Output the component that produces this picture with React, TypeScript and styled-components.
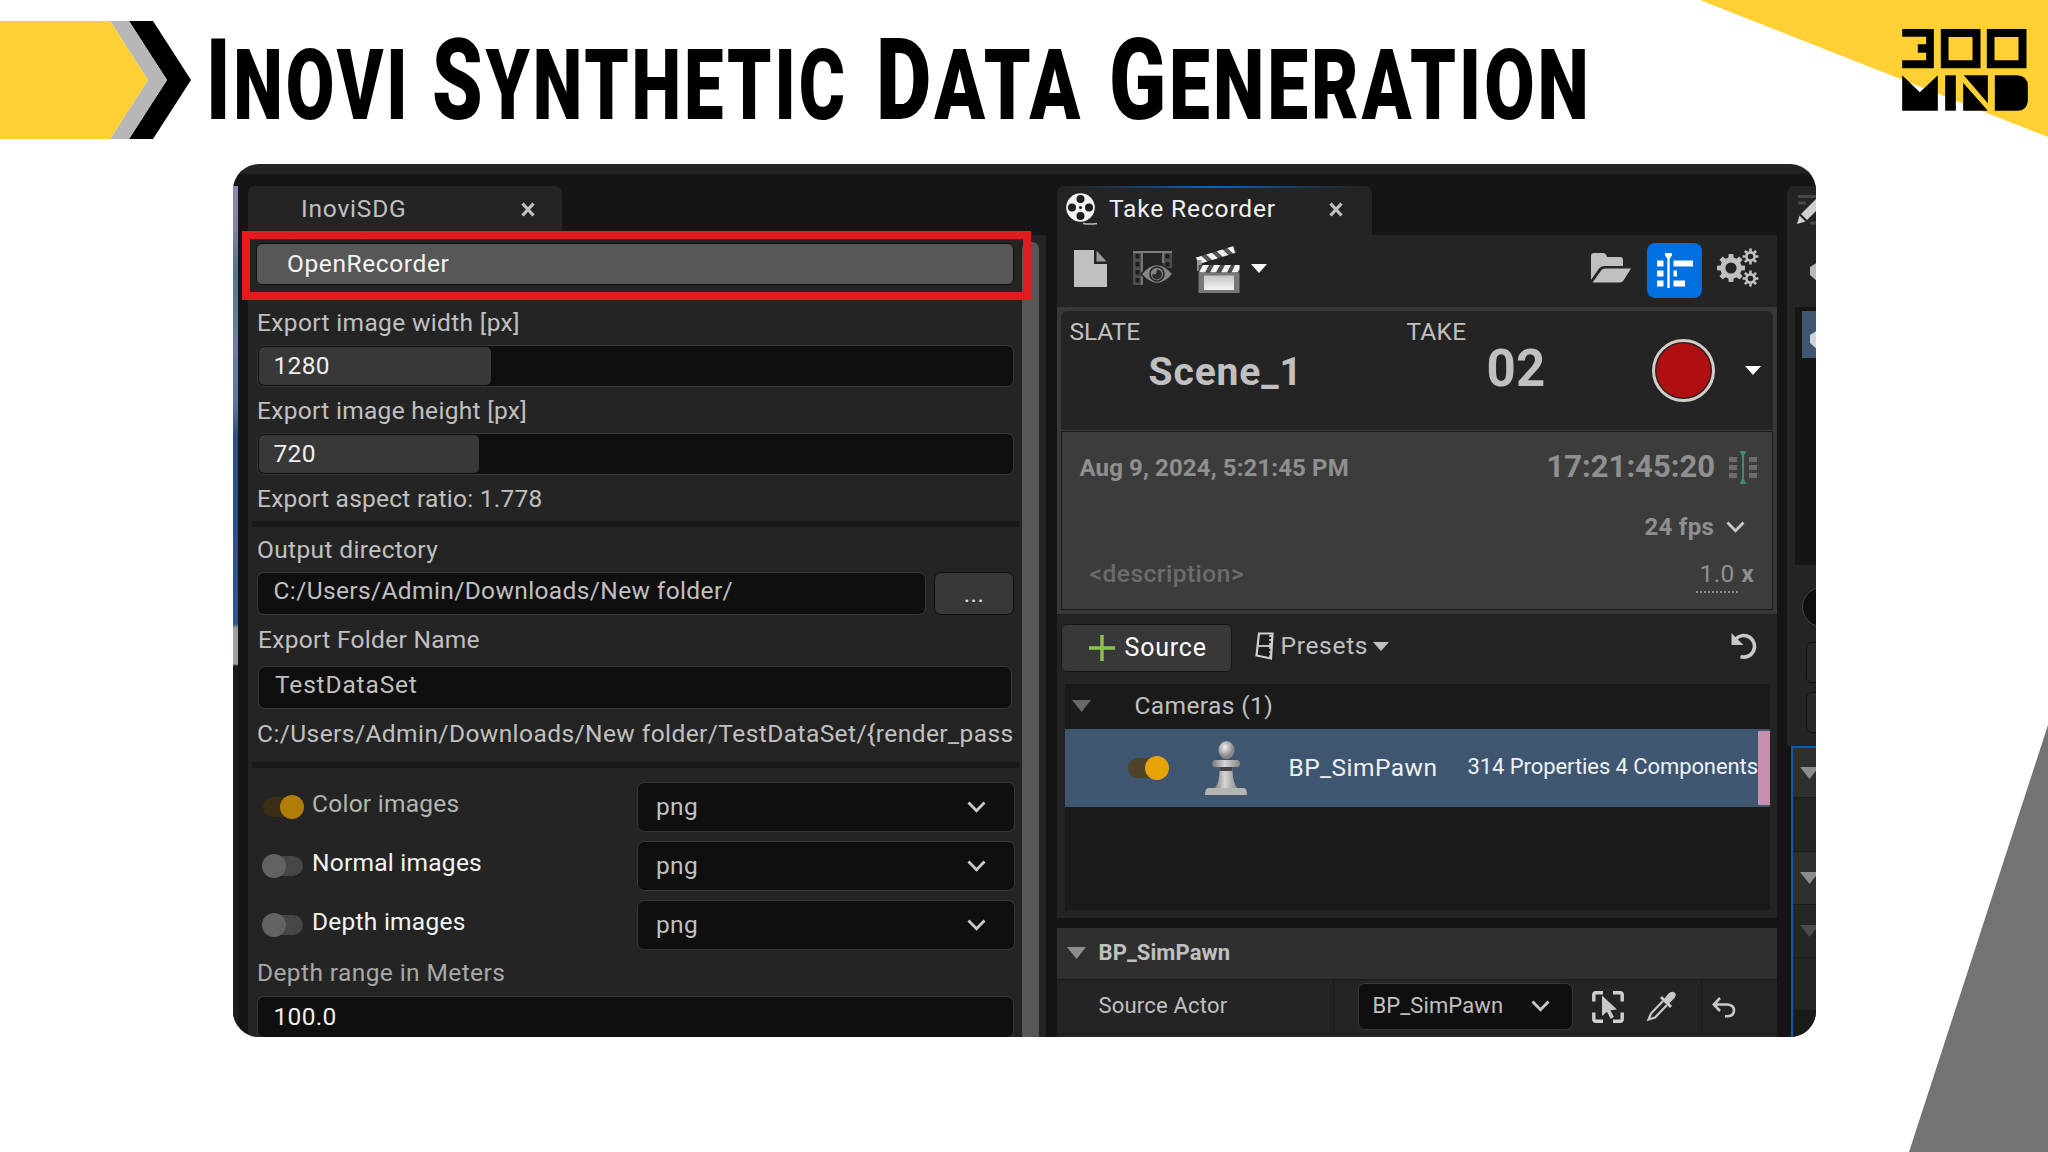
import React from "react";
import styled, { createGlobalStyle } from "styled-components";

const GlobalStyle = createGlobalStyle`
  html, body { margin: 0; padding: 0; background: #fff; }
  body { width: 2048px; height: 1152px; overflow: hidden; }
  *, *::before, *::after { box-sizing: border-box; }
`;

const c = {
  yellow: "#ffd034",
  panel: "#242424",
  gutter: "#151515",
  input: "#0f0f0f",
  line: "#383838",
  header: "#2f2f2f",
  recess: "#1a1a1a",
  text: "#c0c0c0",
  blue: "#0070e0",
  select: "#3e566f",
};

const Slide = styled.main`
  position: relative;
  width: 2048px;
  height: 1152px;
  overflow: hidden;
  background: #fff;
  font-family: Roboto, "Liberation Sans", sans-serif;
`;

const Backdrop = styled.svg`
  position: absolute;
  inset: 0;
`;

const SlideHeader = styled.header`
  position: relative;
  display: flex;
  justify-content: space-between;
  align-items: flex-start;
  height: 164px;
  padding: 0 20px 0 206px;
`;

const Title = styled.h1`
  display: flex;
  margin: 0;
  height: 160px;
  color: #000;
  font-size: 112.5px;
  font-weight: 900;
  letter-spacing: 4px;
  line-height: 160px;
`;

const Word = styled.span<{ $width: number; $gap: number; $scale: number }>`
  display: block;
  width: ${(p) => p.$width}px;
  margin-right: ${(p) => p.$gap}px;
  white-space: nowrap;
  transform: translateY(1px) scaleX(${(p) => p.$scale});
  transform-origin: 0 50%;
`;

const SmallCaps = styled.span`
  font-size: 98px;
`;

const LogoMark = styled.svg`
  display: block;
  margin-top: 29px;
`;

const Editor = styled.section`
  position: relative;
  display: flex;
  width: 1583px;
  height: 873px;
  margin-left: 233px;
  padding-top: 22px;
  overflow: hidden;
  border-radius: 26px;
  background: linear-gradient(${c.panel} 0 9px, ${c.gutter} 11px);
`;

const ViewportSliver = styled.div`
  flex: none;
  width: 5px;
  height: 852px;
  margin-right: 10px;
  background: linear-gradient(
    #8e88b2 0,
    #827fa8 45px,
    #537590 85px,
    #6e7fa3 160px,
    #5b7698 220px,
    #2d4c82 250px,
    #2d568a 438px,
    #a39d9b 442px 478px,
    #1c1c1c 480px
  );
`;

const Column = styled.div<{ $width: number; $gap?: number }>`
  display: flex;
  flex: none;
  flex-direction: column;
  width: ${(p) => p.$width}px;
  margin-right: ${(p) => p.$gap ?? 0}px;
`;

const Tab = styled.div<{ $width: number; $active?: boolean; $pad: string }>`
  position: relative;
  display: flex;
  flex: none;
  align-items: center;
  width: ${(p) => p.$width}px;
  height: 49px;
  padding: ${(p) => p.$pad};
  border-radius: 7px 7px 0 0;
  background: ${(p) =>
    p.$active
      ? `linear-gradient(90deg, transparent 5%, #0a64c0 50%, transparent 95%) top / 100% 2px no-repeat, ${c.panel}`
      : c.panel};
`;

const Text = styled.span<{
  $size?: number;
  $weight?: number;
  $color?: string;
  $track?: number;
  $ml?: number;
}>`
  flex: none;
  margin-left: ${(p) => p.$ml ?? 0}px;
  color: ${(p) => p.$color ?? c.text};
  font-size: ${(p) => p.$size ?? 24.5}px;
  font-weight: ${(p) => p.$weight ?? 400};
  letter-spacing: ${(p) => p.$track ?? 0.3}px;
  line-height: 30px;
  white-space: pre;
`;

const Icon = styled.svg<{ $ml?: number; $mt?: number }>`
  display: block;
  flex: none;
  margin-left: ${(p) => p.$ml ?? 0}px;
  margin-top: ${(p) => p.$mt ?? 0}px;
  overflow: visible;
`;

const SettingsBody = styled.div`
  display: flex;
  flex: 1;
  background: ${c.panel};
`;

const Form = styled.div`
  display: flex;
  flex-direction: column;
  width: 771px;
  padding: 8px 5px 0 4px;
`;

const Scrollbar = styled.div`
  width: 17px;
  margin: 7px 0 0 3px;
  border-radius: 7px 7px 0 0;
  background: #575757;
`;

const OpenButton = styled.button`
  flex: none;
  width: 758px;
  height: 42px;
  margin-left: 4px;
  padding: 0 0 0 30px;
  border: 1.5px solid ${c.input};
  border-radius: 6px;
  background: #575757;
  text-align: left;
  font-family: inherit;
`;

const Highlight = styled.div`
  position: absolute;
  left: 9px;
  top: 67px;
  width: 789px;
  height: 69px;
  border: 8px solid #e51a1c;
`;

const FieldLabel = styled.label<{ $top: number; $bottom: number; $indent?: number }>`
  display: flex;
  flex: none;
  width: 757px;
  overflow: hidden;
  margin: ${(p) => p.$top}px 0 ${(p) => p.$bottom}px ${(p) => 5 + (p.$indent ?? 0)}px;
`;

const FieldRow = styled.div`
  display: flex;
  flex: none;
  gap: 8px;
`;

const Field = styled.div<{ $width?: number; $height?: number; $indent?: number; $lift?: number }>`
  position: relative;
  display: flex;
  flex: none;
  align-items: center;
  width: ${(p) => p.$width ?? 757}px;
  height: ${(p) => p.$height ?? 42}px;
  margin-left: ${(p) => 4.5 + (p.$indent ?? 0)}px;
  padding: 0 0 ${(p) => p.$lift ?? 0}px 16px;
  border: 1.5px solid ${c.line};
  border-radius: 7px;
  background: ${c.input};
`;

const SliderFill = styled.div<{ $width: number }>`
  position: absolute;
  left: 1px;
  top: 1px;
  bottom: 1px;
  width: ${(p) => p.$width}px;
  border-radius: 5px;
  background: ${c.line};
`;

const OnTop = styled.span`
  position: relative;
  display: flex;
`;

const BrowseButton = styled.button`
  width: 80px;
  height: 43px;
  padding: 0 0 0 1px;
  border: 1.5px solid ${c.input};
  border-radius: 7px;
  background: ${c.line};
  font-family: inherit;
`;

const Divider = styled.hr`
  flex: none;
  width: 767px;
  height: 6px;
  margin: 0;
  border: 0;
  background: ${c.recess};
`;

const FormatList = styled.div`
  display: flex;
  flex: none;
  flex-direction: column;
  gap: 9px;
  padding: 14px 0 0 10px;
`;

const FormatRow = styled.div`
  display: flex;
  align-items: center;
  height: 50px;
`;

const FormatName = styled.div`
  flex: none;
  width: 333px;
  padding: 0 0 6px 8px;
`;

const Switch = styled.div<{ $on?: boolean }>`
  position: relative;
  display: flex;
  flex: none;
  align-items: center;
  justify-content: ${(p) => (p.$on ? "flex-end" : "flex-start")};
  width: 42px;
  height: 24px;
  &::before {
    content: "";
    position: absolute;
    inset: 2px 1px;
    border-radius: 10px;
    background: ${(p) => (p.$on ? "#3a2e17" : "#464646")};
  }
  &::after {
    content: "";
    position: relative;
    width: 24px;
    height: 24px;
    border-radius: 50%;
    background: ${(p) => (p.$on ? "#b07d08" : "#626262")};
  }
`;

const RowSwitch = styled.div`
  position: relative;
  flex: none;
  width: 41px;
  height: 24px;
  margin-left: 63px;
  &::before {
    content: "";
    position: absolute;
    inset: 2px 4px 2px 0;
    border-radius: 10px;
    background: #4f4526;
  }
  &::after {
    content: "";
    position: absolute;
    right: 0;
    width: 24px;
    height: 24px;
    border-radius: 50%;
    background: #e5a305;
  }
`;

const Select = styled.div<{ $width: number; $height: number; $pad: string }>`
  display: flex;
  flex: none;
  align-items: center;
  justify-content: space-between;
  width: ${(p) => p.$width}px;
  height: ${(p) => p.$height}px;
  padding: ${(p) => p.$pad};
  border: 1.5px solid ${c.line};
  border-radius: 7px;
  background: ${c.input};
`;

const Toolbar = styled.div`
  display: flex;
  flex: none;
  align-items: center;
  height: 72px;
  padding: 0 18px 6px 0;
  background: ${c.panel};
`;

const Spacer = styled.div`
  flex: 1;
`;

const BlueButton = styled.button`
  display: grid;
  place-items: center;
  width: 55px;
  height: 55px;
  margin: 5px 15px 0 16px;
  padding: 0;
  border: 0;
  border-radius: 8px;
  background: ${c.blue};
`;

const SlateFrame = styled.div`
  flex: none;
  height: 307px;
  padding: 4px;
  background: ${c.line};
`;

const SlateTop = styled.div`
  display: flex;
  height: 119px;
  padding-top: 6px;
  border-radius: 6px 6px 2px 2px;
  background: ${c.panel};
`;

const SlateCell = styled.div<{ $width: number }>`
  display: flex;
  flex-direction: column;
  width: ${(p) => p.$width}px;
  padding-left: 9px;
`;

const BigValue = styled.strong<{ $size: number; $indent: number; $top: number; $track: number }>`
  margin: ${(p) => p.$top}px 0 0 ${(p) => p.$indent}px;
  color: ${c.text};
  font-size: ${(p) => p.$size}px;
  font-weight: 700;
  letter-spacing: ${(p) => p.$track}px;
  line-height: 50px;
`;

const RecordCell = styled.div`
  display: flex;
  align-items: center;
  height: 106px;
`;

const RecordButton = styled.button`
  width: 63px;
  height: 63px;
  padding: 0;
  border: 3px solid #d4cdc6;
  border-radius: 50%;
  background: radial-gradient(#b00f12 0 26.5px, #2a2020 27.5px);
`;

const SlateMeta = styled.div`
  display: flex;
  justify-content: space-between;
  height: 179px;
  margin-top: 1px;
  padding: 20px 15px 0 18px;
  border: 1.5px solid #1c1c1c;
  background: #3c3c3c;
`;

const MetaSide = styled.div<{ $end?: boolean }>`
  display: flex;
  flex-direction: column;
  align-items: ${(p) => (p.$end ? "flex-end" : "flex-start")};
`;

const MetaLine = styled.div<{ $top?: number; $right?: number; $left?: number }>`
  display: flex;
  align-items: center;
  height: 30px;
  margin: ${(p) => p.$top ?? 0}px ${(p) => p.$right ?? 0}px 0 ${(p) => p.$left ?? 0}px;
`;

const Dotted = styled.span`
  display: flex;
  justify-content: flex-end;
  width: 42px;
  height: 34px;
  margin-top: 4px;
  padding-right: 4px;
  border-bottom: 2px dotted #8f8f8f;
`;

const SourceBar = styled.div`
  display: flex;
  flex: none;
  align-items: center;
  height: 70px;
  padding: 0 19px 6px 4px;
  background: ${c.panel};
`;

const SourceButton = styled.button`
  display: flex;
  align-items: center;
  width: 171px;
  height: 48px;
  margin-top: 3px;
  padding: 0 0 0 27px;
  border: 1.5px solid ${c.gutter};
  border-radius: 6px;
  background: ${c.line};
  font-family: inherit;
`;

const SourceList = styled.div`
  flex: none;
  height: 234px;
  padding: 0 7px 8px 8px;
  background: ${c.panel};
`;

const SourceRows = styled.div`
  height: 226px;
  background: ${c.recess};
`;

const GroupRow = styled.div`
  display: flex;
  align-items: center;
  height: 45px;
  padding: 0 0 1px 7px;
`;

const ActorRow = styled.div`
  display: flex;
  align-items: center;
  height: 78px;
  background: ${c.select};
`;

const ActorStats = styled.div`
  display: flex;
  padding-bottom: 2px;
`;

const PinkTag = styled.div`
  width: 12px;
  height: 74px;
  background: #c98fae;
`;

const DetailsHeader = styled.div`
  display: flex;
  flex: none;
  align-items: center;
  height: 51px;
  margin-top: 10px;
  padding: 0 0 2px 10px;
  background: ${c.header};
`;

const PropertyRow = styled.div`
  display: flex;
  flex: none;
  height: 55px;
  border: solid ${c.recess};
  border-width: 1.5px 0;
  background: ${c.panel};
`;

const PropertyCell = styled.div<{ $width?: number; $pad: string }>`
  display: flex;
  align-items: center;
  width: ${(p) => (p.$width ? `${p.$width}px` : "auto")};
  padding: ${(p) => p.$pad};
  border-right: 1.5px solid ${c.recess};
  &:last-child { border-right: 0; }
`;

const PanelEnd = styled.div`
  flex: 1;
  background: ${c.panel};
`;

const OutlinerTop = styled.div`
  height: 72px;
  padding: 26px 0 0 23px;
  background: ${c.panel};
`;

const OutlinerList = styled.div`
  height: 258px;
  padding-top: 4px;
  border-left: 8px solid ${c.panel};
  background: ${c.gutter};
`;

const OutlinerSelected = styled.div`
  height: 47px;
  margin-left: 7px;
  padding: 18px 0 0 8px;
  background: ${c.select};
`;

const OutlinerFields = styled.div`
  height: 181px;
  padding: 22px 0 0 15px;
  background: ${c.panel};
`;

const SearchPill = styled.div`
  width: 40px;
  height: 40px;
  border: 1.5px solid #454545;
  border-radius: 50%;
  background: ${c.input};
`;

const SmallField = styled.div<{ $top: number }>`
  width: 40px;
  height: 41px;
  margin: ${(p) => p.$top}px 0 0 4px;
  border: 1.5px solid #111;
  border-radius: 6px;
  background: #292929;
`;

const DetailsSliver = styled.div`
  flex: 1;
  margin-left: 4px;
  border: solid #0a5db5;
  border-width: 2px 0 0 2px;
  background: ${c.recess};
`;

const SliverRow = styled.div<{ $height: number; $fill: string }>`
  display: flex;
  align-items: center;
  height: ${(p) => p.$height}px;
  padding-left: 7px;
  border-bottom: 1.5px solid ${c.recess};
  background: ${(p) => p.$fill};
`;

const Close = ({ ml }: { ml: number }) => (
  <Icon $ml={ml} width="14" height="15" viewBox="0 0 14 15">
    <path d="M1.5 1.5 12.5 13.5M12.5 1.5 1.5 13.5" stroke="#c0c0c0" strokeWidth="3.2" />
  </Icon>
);

const Chevron = ({ ml, color = "#c8c8c8" }: { ml?: number; color?: string }) => (
  <Icon $ml={ml} width="19" height="12" viewBox="0 0 19 12">
    <path d="M1.5 1.5 9.5 9.7 17.5 1.5" fill="none" stroke={color} strokeWidth="2.8" />
  </Icon>
);

const Caret = ({ ml, w, h, color }: { ml?: number; w: number; h: number; color: string }) => (
  <Icon $ml={ml} width={w} height={h} viewBox="0 0 10 10" preserveAspectRatio="none">
    <path d="M0 0H10L5 10Z" fill={color} />
  </Icon>
);

const gearPath = (cx: number, cy: number, r: number, tooth: number, n: number) => {
  const pts: string[] = [];
  for (let i = 0; i < n; i++) {
    const a = (i / n) * Math.PI * 2 - Math.PI / 2;
    const w = Math.PI / n;
    [
      [-0.62, r],
      [-0.42, r + tooth],
      [0.42, r + tooth],
      [0.62, r],
    ].forEach(([k, rad]) => {
      pts.push(`${(cx + Math.cos(a + k * w) * rad).toFixed(2)} ${(cy + Math.sin(a + k * w) * rad).toFixed(2)}`);
    });
  }
  return `M${pts.join("L")}Z`;
};

const ring = (cx: number, cy: number, r: number) =>
  `M${cx - r} ${cy}a${r} ${r} 0 1 0 ${2 * r} 0a${r} ${r} 0 1 0 ${-2 * r} 0Z`;

const Gears = () => (
  <Icon width="42" height="38" viewBox="0 0 42 38" fill="#c0c0c0" fillRule="evenodd">
    <path d={gearPath(14, 19, 10.8, 3.4, 8) + ring(14, 19, 5.6)} />
    <path d={gearPath(33.5, 7.5, 5.4, 2.6, 8) + ring(33.5, 7.5, 2.8)} />
    <path d={gearPath(33.5, 29.5, 5.4, 2.6, 8) + ring(33.5, 29.5, 2.8)} />
  </Icon>
);

const FilmReel = () => (
  <Icon width="31" height="32" viewBox="0 0 31 32">
    <circle cx="14.5" cy="14.5" r="14.3" fill="#f2f2f2" />
    <g fill="#1d1d1d">
      <circle cx="14.5" cy="6" r="4" />
      <circle cx="14.5" cy="23" r="4" />
      <circle cx="6" cy="14.5" r="4" />
      <circle cx="23" cy="14.5" r="4" />
      <circle cx="14.5" cy="14.5" r="1.5" />
    </g>
    <path d="M17 30.5q7 1.2 14 0" stroke="#bbb" strokeWidth="1.5" fill="none" />
  </Icon>
);

const NewDocument = () => (
  <Icon $ml={17} width="33" height="37" viewBox="0 0 33 37">
    <path d="M0 0H20V14H33V37H0Z" fill="#c0c0c0" />
    <path d="M22.5 .5 32.5 11.5H22.5Z" fill="#9a9a9a" />
  </Icon>
);

const FilmEye = () => (
  <Icon $ml={26} width="40" height="34" viewBox="0 0 40 34">
    <path d="M0 0H9V34H0ZM30 0H39V17H30Z" fill="#4e4e4e" />
    <path
      d="M2.500 3h4v4.500h-4ZM2.500 11h4v4.500h-4ZM2.500 19h4v4.500h-4ZM2.500 27h4v4.500h-4ZM32.500 3h4v4.500h-4ZM32.500 11h4v4.500h-4Z"
      fill="#1c1c1c"
    />
    <path d="M0 1H39M9 0V34M30 0V12" stroke="#7c7c7c" strokeWidth="1.8" />
    <path d="M8 23Q24 4 40 23 24 42 8 23Z" fill="#858585" stroke={c.panel} strokeWidth="1.5" />
    <circle cx="24" cy="23" r="7" fill="#858585" stroke="#242424" strokeWidth="1.6" />
    <path d="M24 18.500a5 5 0 1 1-5 5l4-.5Z" fill="#2c2c2c" />
  </Icon>
);

const Clapper = () => (
  <Icon $ml={24} $mt={4} width="43" height="45" viewBox="0 0 43 45">
    <defs>
      <linearGradient id="board" x1="0" y1="0" x2="0" y2="1">
        <stop offset="0" stopColor="#c4c4c4" />
        <stop offset="1" stopColor="#f4f4f4" />
      </linearGradient>
    </defs>
    <g transform="rotate(-17 2 17)">
      <rect x="1" y="9" width="40" height="7" fill="#555" />
      <path d="M1 9h6l4 7H4ZM12 9h6l4 7h-6ZM23 9h6l4 7h-6ZM34 9h6v7h-2Z" fill="#f3f3f3" />
    </g>
    <path d="M0 12h4.500v11H0Z" fill="#9a9a9a" />
    <rect x="1.500" y="17" width="41" height="7.500" fill="#4c4c4c" />
    <path d="M6 17h6l-4 7.500H2ZM17 17h6l-4 7.500h-6ZM28 17h6l-4 7.500h-6ZM38 17h4.500v4l-2 3.500h-6Z" fill="#f5f5f5" />
    <rect x="1.500" y="24.500" width="41" height="20.500" fill="#777" />
    <rect x="7" y="27.500" width="30" height="14.500" fill="url(#board)" />
  </Icon>
);

const Folder = () => (
  <Icon width="40" height="30" viewBox="0 0 40 30" fill="#c0c0c0">
    <path d="M0 27V3Q0 0 3 0H12Q15 0 16 4H29Q32 4 32 7V13H13Q10 13 8 15.500Z" />
    <path d="M1.500 29.500 10.500 17Q11.500 15.500 13.500 15.500H40L32.500 27.500Q31 29.500 29 29.500Z" />
  </Icon>
);

const SequencerIcon = () => (
  <Icon width="36" height="35" viewBox="0 0 36 35" fill="#fff">
    <path d="M0 7.500h6.500v6H0ZM0 17.500h6.500v6H0ZM0 27.500h6.500v6H0ZM16.500 7.500H36v6H16.500ZM16.500 17.500H20v6h-3.500ZM16.500 27.500H28v6H16.500Z" />
    <path d="M8 0h7v2.500l-2.300 3V35h-2.400V5.500L8 2.500Z" />
  </Icon>
);

const TimecodeIcon = () => (
  <Icon $ml={14} width="28" height="33" viewBox="0 0 28 33">
    <path d="M0 6h8v5H0ZM0 14h8v5H0ZM0 22h8v5H0ZM20 6h8v5H20ZM20 14h8v5H20ZM20 22h8v5H20Z" fill="#6c6c6c" />
    <path d="M10.500 0h7L15 4.500V28l2.500 5h-7L13 28V4.500Z" fill="#3b8a72" />
  </Icon>
);

const PresetIcon = () => (
  <Icon $ml={23} width="19" height="28" viewBox="0 0 19 28">
    <path d="M4 1.500H17.500L16 26.500 1.500 23.500Z" fill="#1d1d1d" stroke="#d0d0d0" strokeWidth="2.2" />
    <path d="M2.500 14H16.500" stroke="#d0d0d0" strokeWidth="1.8" />
    <path d="M15.500 3v22" stroke="#d0d0d0" strokeWidth="2.5" strokeDasharray="2 2" />
  </Icon>
);

const ResetIcon = () => (
  <Icon width="27" height="28" viewBox="0 0 27 28">
    <path d="M5 6.800A10.800 10.800 0 1 1 9.500 24.600" fill="none" stroke="#c8c8c8" strokeWidth="3.6" />
    <path d="M.5 1V13H12.500L8.700 9.200 4.200 4.700Z" fill="#c8c8c8" />
  </Icon>
);

const Pawn = () => (
  <Icon $ml={36} width="42" height="54" viewBox="0 0 42 54">
    <defs>
      <linearGradient id="pawn" x1="0" x2="1">
        <stop offset="0" stopColor="#777" />
        <stop offset=".45" stopColor="#d6d6d6" />
        <stop offset="1" stopColor="#858585" />
      </linearGradient>
      <radialGradient id="head" cx=".4" cy=".35">
        <stop offset="0" stopColor="#f2f2f2" />
        <stop offset="1" stopColor="#8a8a8a" />
      </radialGradient>
    </defs>
    <path d="M14.500 25H27.500V31Q28 42 33 48H9Q14.500 42 14.500 31Z" fill="url(#pawn)" />
    <path d="M14.500 25.500H27.500V30H14.500Z" fill="#444" />
    <rect x="7" y="19" width="28" height="7" rx="3.500" fill="url(#pawn)" />
    <ellipse cx="21.500" cy="9" rx="8" ry="9" fill="url(#head)" />
    <path d="M3 47H39Q42 47.500 42 54H0Q0 47.500 3 47Z" fill="#b4b4b4" />
  </Icon>
);

const PickActor = () => (
  <Icon $ml={19} width="32" height="32" viewBox="0 0 32 32">
    <path
      d="M1.800 10.500V4Q1.800 1.800 4 1.800H11M21 1.800H28Q30.200 1.800 30.200 4V10.500M30.200 21.500V28Q30.200 30.200 28 30.200H21M11 30.200H4Q1.800 30.200 1.800 28V21.500"
      fill="none"
      stroke="#d0d0d0"
      strokeWidth="3.4"
    />
    <path d="M10 4.500 25 18.500 18.300 19.200 22 26 18.600 27.800 15 20.800 10 25Z" fill="#c8c8c8" />
  </Icon>
);

const Eyedropper = () => (
  <Icon $ml={22} width="30" height="31" viewBox="0 0 30 31">
    <path d="M17 10 5 22.500 2.500 28.500 9 26.500 21 14" fill="none" stroke="#c8c8c8" strokeWidth="2.2" />
    <path d="M14 7 24 17 26 15 23.500 12 28.500 7Q31 3.500 28.500 1.500 26 -.5 22.500 2.500L18.500 7.500 16 5Z" fill="#c8c8c8" />
  </Icon>
);

const Revert = () => (
  <Icon width="24" height="21" viewBox="0 0 24 21">
    <path d="M8 1 1.800 7.500 8 14M2 7.500H15.500Q22 8 22 13.500T15.500 19.200H13" fill="none" stroke="#c8c8c8" strokeWidth="2.6" />
  </Icon>
);

const Logo = () => (
  <LogoMark width="126" height="82" viewBox="757 87 377 246" fillRule="evenodd">
    <path d="M757 87H852V205H757V181H829V158H804V133H829V110H757Z" />
    <path d="M873 87H992V205H873ZM896 111V181H968V111Z" />
    <path d="M1011 87H1130V205H1011ZM1034 111V181H1106V111Z" />
    <path d="M757 226 810 277 864 226V332H757Z" />
    <path d="M886 226H918V332H886Z" />
    <path d="M940 248 1014 332H940ZM942 226H1014V310Z" />
    <path d="M1035 226H1102Q1134 228 1134 258V302Q1132 332 1102 332H1035Z" />
  </LogoMark>
);

const formats = [
  { name: "Color images", on: true },
  { name: "Normal images", on: false },
  { name: "Depth images", on: false },
];

const SettingsPanel = () => (
  <Column $width={798} $gap={10.5}>
    <Tab $width={314} $pad="0 0 3px 53px">
      <Text $track={0.8}>InoviSDG</Text>
      <Close ml={114} />
    </Tab>
    <SettingsBody>
      <Form>
        <OpenButton>
          <Text $color="#f4f4f4" $track={0.6}>OpenRecorder</Text>
        </OpenButton>
        <FieldLabel $top={23} $bottom={7}>
          <Text $track={0.35}>Export image width [px]</Text>
        </FieldLabel>
        <Field>
          <SliderFill $width={232} />
          <OnTop><Text $color="#eee">1280</Text></OnTop>
        </Field>
        <FieldLabel $top={9} $bottom={7}>
          <Text>Export image height [px]</Text>
        </FieldLabel>
        <Field>
          <SliderFill $width={220} />
          <OnTop><Text $color="#eee">720</Text></OnTop>
        </Field>
        <FieldLabel $top={9} $bottom={7}>
          <Text $track={0.25}>Export aspect ratio: 1.778</Text>
        </FieldLabel>
        <Divider />
        <FieldLabel $top={8} $bottom={7}>
          <Text $track={0.37}>Output directory</Text>
        </FieldLabel>
        <FieldRow>
          <Field $width={669} $height={43} $lift={5}>
            <Text $track={0.38}>C:/Users/Admin/Downloads/New folder/</Text>
          </Field>
          <BrowseButton>
            <Text $color="#ddd">...</Text>
          </BrowseButton>
        </FieldRow>
        <FieldLabel $top={10} $bottom={11} $indent={1}>
          <Text>Export Folder Name</Text>
        </FieldLabel>
        <Field $width={754} $height={43} $indent={1.5} $lift={5}>
          <Text $track={0.85}>TestDataSet</Text>
        </Field>
        <FieldLabel $top={10} $bottom={13}>
          <Text $track={0.43}>{"C:/Users/Admin/Downloads/New folder/TestDataSet/{render_pass"}</Text>
        </FieldLabel>
        <Divider />
        <FormatList>
          {formats.map((f) => (
            <FormatRow key={f.name}>
              <Switch $on={f.on} />
              <FormatName>
                <Text $color={f.on ? "#b4b4b4" : "#f4f4f4"} $track={0.25}>{f.name}</Text>
              </FormatName>
              <Select $width={378} $height={50} $pad="0 28px 0 18px">
                <Text>png</Text>
                <Chevron />
              </Select>
            </FormatRow>
          ))}
        </FormatList>
        <FieldLabel $top={8} $bottom={8}>
          <Text $color="#a8a8a8" $track={0.4}>Depth range in Meters</Text>
        </FieldLabel>
        <Field $lift={1}>
          <Text $color="#eee">100.0</Text>
        </Field>
      </Form>
      <Scrollbar />
    </SettingsBody>
  </Column>
);

const RecorderPanel = () => (
  <Column $width={720.5} $gap={10}>
    <Tab $width={315} $active $pad="0 0 3px 9.5px">
      <FilmReel />
      <Text $ml={12} $color="#f2f2f2" $track={0.85}>Take Recorder</Text>
      <Close ml={53} />
    </Tab>
    <Toolbar>
      <NewDocument />
      <FilmEye />
      <Clapper />
      <Caret ml={11} w={16} h={9} color="#fff" />
      <Spacer />
      <Folder />
      <BlueButton><SequencerIcon /></BlueButton>
      <Gears />
    </Toolbar>
    <SlateFrame>
      <SlateTop>
        <SlateCell $width={337}>
          <Text $track={-0.1}>SLATE</Text>
          <BigValue $size={39} $indent={79} $top={0} $track={0.9}>Scene_1</BigValue>
        </SlateCell>
        <SlateCell $width={254}>
          <Text $track={0.2}>TAKE</Text>
          <BigValue $size={51} $indent={80} $top={-3} $track={0.3}>02</BigValue>
        </SlateCell>
        <RecordCell>
          <RecordButton aria-label="Record" />
          <Caret ml={30} w={16} h={9} color="#fff" />
        </RecordCell>
      </SlateTop>
      <SlateMeta>
        <MetaSide>
          <MetaLine $top={1}>
            <Text $weight={700} $size={24} $color="#8f8f8f" $track={0.12}>Aug 9, 2024, 5:21:45 PM</Text>
          </MetaLine>
          <MetaLine $top={76} $left={10}>
            <Text $weight={500} $color="#6c6c6c" $track={0.5}>{"<description>"}</Text>
          </MetaLine>
        </MetaSide>
        <MetaSide $end>
          <MetaLine>
            <Text $weight={700} $size={31} $color="#8f8f8f" $track={0}>17:21:45:20</Text>
            <TimecodeIcon />
          </MetaLine>
          <MetaLine $top={30} $right={12}>
            <Text $weight={700} $size={24} $color="#8f8f8f" $track={0.25}>24 fps</Text>
            <Chevron ml={12} />
          </MetaLine>
          <MetaLine $top={17} $right={3}>
            <Dotted><Text $color="#8f8f8f">1.0</Text></Dotted>
            <Text $ml={3} $weight={700} $size={24} $color="#8f8f8f">x</Text>
          </MetaLine>
        </MetaSide>
      </SlateMeta>
    </SlateFrame>
    <SourceBar>
      <SourceButton>
        <Icon width="26" height="26" viewBox="0 0 26 26">
          <path d="M13 0V26M0 13H26" stroke="#8bc24a" strokeWidth="3.4" />
        </Icon>
        <Text $ml={10} $color="#fff" $size={25} $track={0.8}>Source</Text>
      </SourceButton>
      <PresetIcon />
      <Text $ml={7} $track={0.7}>Presets</Text>
      <Caret ml={5} w={16} h={9} color="#c0c0c0" />
      <Spacer />
      <ResetIcon />
    </SourceBar>
    <SourceList>
      <SourceRows>
        <GroupRow>
          <Caret w={19} h={12} color="#686868" />
          <Text $ml={44} $track={0.4}>Cameras (1)</Text>
        </GroupRow>
        <ActorRow>
          <RowSwitch />
          <Pawn />
          <Text $ml={42} $color="#eef1f5" $track={0.45}>BP_SimPawn</Text>
          <Spacer />
          <ActorStats>
            <Text $size={22} $color="#eef1f5" $track={-0.08}>314 Properties 4 Components</Text>
          </ActorStats>
          <PinkTag />
        </ActorRow>
      </SourceRows>
    </SourceList>
    <DetailsHeader>
      <Caret w={19} h={12} color="#8c8c8c" />
      <Text $ml={13} $size={22} $weight={700} $track={0.1}>BP_SimPawn</Text>
    </DetailsHeader>
    <PropertyRow>
      <PropertyCell $width={277} $pad="0 0 1px 42px">
        <Text $size={22} $track={0.2}>Source Actor</Text>
      </PropertyCell>
      <PropertyCell $width={368} $pad="0 0 0 24px">
        <Select $width={215} $height={47} $pad="0 22px 1px 14px">
          <Text $size={22} $track={0.1}>BP_SimPawn</Text>
          <Chevron />
        </Select>
        <PickActor />
        <Eyedropper />
      </PropertyCell>
      <PropertyCell $pad="2px 0 0 10px">
        <Revert />
      </PropertyCell>
    </PropertyRow>
    <PanelEnd />
  </Column>
);

const OutlinerSliver = () => (
  <Column $width={31}>
    <Tab $width={60} $pad="0 0 3px 9px">
      <Icon width="26" height="30" viewBox="0 0 26 30">
        <path d="M2 2.500H26M2 9H10M14 29H26" stroke="#484848" strokeWidth="3" />
        <path d="M5 20 20 5 26 11 11 26ZM3.500 21.500 9.500 27.500 1 30Z" fill="#d0d0d0" />
      </Icon>
    </Tab>
    <OutlinerTop>
      <Icon width="16" height="22" viewBox="0 0 16 22">
        <path d="M0 6 8 1V21L0 14Z" fill="#b8b8b8" />
      </Icon>
    </OutlinerTop>
    <OutlinerList>
      <OutlinerSelected>
        <Icon width="16" height="22" viewBox="0 0 16 22">
          <path d="M0 6 8 1V21L0 14Z" fill="#d0d5da" />
        </Icon>
      </OutlinerSelected>
    </OutlinerList>
    <OutlinerFields>
      <SearchPill />
      <SmallField $top={15} />
      <SmallField $top={9} />
    </OutlinerFields>
    <DetailsSliver>
      <SliverRow $height={50} $fill={c.header}><Caret w={19} h={12} color="#8c8c8c" /></SliverRow>
      <SliverRow $height={54} $fill={c.panel} />
      <SliverRow $height={53} $fill={c.header}><Caret w={19} h={12} color="#8c8c8c" /></SliverRow>
      <SliverRow $height={53} $fill="#262626"><Caret w={19} h={12} color="#4a4a4a" /></SliverRow>
      <SliverRow $height={53} $fill={c.panel} />
    </DetailsSliver>
  </Column>
);

const titleWords = [
  { text: "Inovi", width: 192, gap: 34, scale: 0.72 },
  { text: "Synthetic", width: 410, gap: 34, scale: 0.72 },
  { text: "Data", width: 200, gap: 33, scale: 0.76 },
  { text: "Generation", width: 472, gap: 0, scale: 0.745 },
];

export default function App() {
  return (
    <>
      <GlobalStyle />
      <Slide>
        <Backdrop width="2048" height="1152" viewBox="0 0 2048 1152">
          <path d="M129 21H153L191 80 153 139H129L167 80Z" fill="#000" />
          <path d="M110 21H129L167 80 129 139H110L148 80Z" fill="#b7b7b7" />
          <path d="M0 21H110L148 80 110 139H0Z" fill={c.yellow} />
          <path d="M1700 0H2048V137Z" fill={c.yellow} />
          <path d="M2048 725V1152H1909Z" fill="#737373" />
        </Backdrop>
        <SlideHeader>
          <Title>
            {titleWords.map((w) => (
              <Word key={w.text} $width={w.width} $gap={w.gap} $scale={w.scale}>
                {w.text[0]}
                <SmallCaps>{w.text.slice(1).toUpperCase()}</SmallCaps>
              </Word>
            ))}
          </Title>
          <Logo />
        </SlideHeader>
        <Editor>
          <ViewportSliver />
          <SettingsPanel />
          <RecorderPanel />
          <OutlinerSliver />
          <Highlight />
        </Editor>
      </Slide>
    </>
  );
}
